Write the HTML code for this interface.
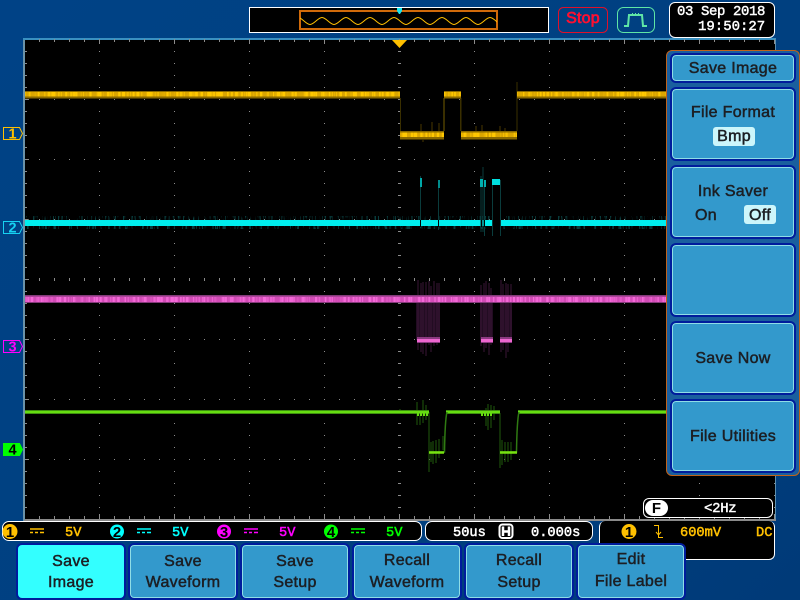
<!DOCTYPE html>
<html><head><meta charset="utf-8"><style>
html,body{margin:0;padding:0;width:800px;height:600px;overflow:hidden}
body{position:relative;background:linear-gradient(135deg,#004286 0%,#004080 60%,#003a78 100%);font-family:"Liberation Sans",sans-serif}
.abs{position:absolute}
.btn{position:absolute;box-sizing:border-box;border:2px solid #001c9c;border-radius:6px;background:#3399cc;box-shadow:inset 0 0 0 1px #8fdde6;}
.t{position:absolute;color:#1c1f24;font-size:16px;letter-spacing:.3px;text-align:center;white-space:nowrap;-webkit-text-stroke:.5px #1c1f24;line-height:20px}
.box{position:absolute;box-sizing:border-box;background:#000;border:1px solid #fff;border-radius:6px}
.m{position:absolute;font-family:"Liberation Mono",monospace;line-height:18px;white-space:nowrap;-webkit-text-stroke:.45px currentColor}
</style></head><body>

<svg class="abs" style="left:0;top:0" width="800" height="600" viewBox="0 0 800 600">
<defs>
<pattern id="gv" width="75" height="12" patternUnits="userSpaceOnUse" patternTransform="translate(24 39)"><rect width="1" height="1" fill="#8c8c8c"/></pattern>
<pattern id="gh" width="15" height="60" patternUnits="userSpaceOnUse" patternTransform="translate(24 39)"><rect width="1" height="1" fill="#8c8c8c"/></pattern>
<pattern id="tT" width="15" height="6" patternUnits="userSpaceOnUse" patternTransform="translate(24 39)"><rect width="1" height="3" fill="#8c8c8c"/></pattern>
<pattern id="tTm" width="75" height="6" patternUnits="userSpaceOnUse" patternTransform="translate(24 39)"><rect width="1" height="5" fill="#8c8c8c"/></pattern>
<pattern id="tB" width="15" height="6" patternUnits="userSpaceOnUse" patternTransform="translate(24 516)"><rect width="1" height="3" fill="#8c8c8c"/></pattern>
<pattern id="tBm" width="75" height="6" patternUnits="userSpaceOnUse" patternTransform="translate(24 514)"><rect width="1" height="5" fill="#8c8c8c"/></pattern>
<pattern id="tL" width="6" height="12" patternUnits="userSpaceOnUse" patternTransform="translate(24 39)"><rect width="3" height="1" fill="#8c8c8c"/></pattern>
<pattern id="tLm" width="6" height="60" patternUnits="userSpaceOnUse" patternTransform="translate(24 39)"><rect width="5" height="1" fill="#8c8c8c"/></pattern>
<pattern id="cV" width="6" height="12" patternUnits="userSpaceOnUse" patternTransform="translate(398 39)"><rect width="3" height="1" fill="#8c8c8c"/></pattern>
<pattern id="cH" width="15" height="6" patternUnits="userSpaceOnUse" patternTransform="translate(24 278)"><rect width="1" height="3" fill="#8c8c8c"/></pattern>
<filter id="n1" x="0" y="0" width="100%" height="100%" color-interpolation-filters="sRGB"><feTurbulence type="fractalNoise" baseFrequency="0.45 0.004" numOctaves="2" seed="3"/><feColorMatrix values="0 0 0 0 0 0 0 0 0 0 0 0 0 0 0 6 0 0 0 -2.6"/><feComposite in="SourceGraphic" operator="in"/></filter>
<filter id="n2" x="0" y="0" width="100%" height="100%" color-interpolation-filters="sRGB"><feTurbulence type="fractalNoise" baseFrequency="0.6 0.05" numOctaves="2" seed="8"/><feColorMatrix values="0 0 0 0 0 0 0 0 0 0 0 0 0 0 0 9 0 0 0 -4.9"/><feComposite in="SourceGraphic" operator="in"/></filter>
<clipPath id="ov"><rect x="300" y="11" width="197" height="18"/></clipPath>
</defs>

<!-- scope screen -->
<rect x="23" y="38" width="753" height="483" fill="#5c8fae"/>
<rect x="23" y="38" width="753" height="2" fill="#3a90c0"/>
<rect x="25" y="40" width="750" height="479" fill="#000"/>
<rect x="24" y="519" width="752" height="2" fill="#8a8a8a"/>
<rect x="23" y="40" width="2" height="480" fill="#6a92a8"/>
<rect x="25" y="39" width="750" height="480" fill="url(#gv)"/>
<rect x="25" y="39" width="750" height="480" fill="url(#gh)"/>
<rect x="25" y="40" width="750" height="3" fill="url(#tT)"/>
<rect x="25" y="40" width="750" height="5" fill="url(#tTm)"/>
<rect x="25" y="516" width="750" height="3" fill="url(#tB)"/>
<rect x="25" y="514" width="750" height="5" fill="url(#tBm)"/>
<rect x="25" y="40" width="3" height="479" fill="url(#tL)"/>
<rect x="25" y="40" width="5" height="479" fill="url(#tLm)"/>
<rect x="398" y="40" width="3" height="479" fill="url(#cV)"/>
<rect x="25" y="278" width="750" height="3" fill="url(#cH)"/>

<!-- CH1 -->
<g>
<path d="M400.500 98V131M443.500 98V132M461 98V131M517 82V131M444.500 98V131M460.500 98V131" stroke="#3a2f00" stroke-width="1" fill="none"/>
<g fill="#8a6a00">
<rect x="25" y="91" width="375" height="7.500"/><rect x="444" y="91" width="17" height="7.500"/><rect x="517" y="91" width="150" height="7.500"/>
<rect x="400" y="131" width="44" height="8.500"/><rect x="461" y="131" width="56" height="8.500"/>
</g>
<g fill="#dba600">
<rect x="25" y="92" width="375" height="4.500"/><rect x="444" y="92" width="17" height="4.500"/><rect x="517" y="92" width="150" height="4.500"/>
<rect x="400" y="132.500" width="44" height="4.500"/><rect x="461" y="132.500" width="56" height="4.500"/>
</g>
<g fill="#ffc800" filter="url(#n1)">
<rect x="25" y="92" width="375" height="4.500"/><rect x="444" y="92" width="17" height="4.500"/><rect x="517" y="92" width="150" height="4.500"/>
<rect x="400" y="132.500" width="44" height="4.500"/><rect x="461" y="132.500" width="56" height="4.500"/>
</g>
<path d="M421 124V131M423 139V142M432 122V131M439 123V131M476 126V131M482 125V131M500 126V131M505 128V131" stroke="#4a3900" fill="none"/>
</g>

<!-- CH2 -->
<g>
<g fill="#083c3c" filter="url(#n2)">
<rect x="25" y="216" width="468" height="13"/><rect x="500" y="216" width="167" height="13"/>
</g>
<g fill="#00eeee">
<rect x="25" y="220" width="468" height="6"/><rect x="500" y="220" width="167" height="6"/>
</g>
<path d="M420.500 176V228M438.500 180V230M481 176V232M484.500 180V236M483 167V232M492.500 180V236M500.500 180V236" stroke="#0a3c3c" stroke-width="1" fill="none"/>
<rect x="420" y="178" width="2" height="9" fill="#00a8a8"/><rect x="438" y="180" width="2" height="8" fill="#008c8c"/>
<rect x="480" y="179" width="3" height="8" fill="#00b0b0"/><rect x="484" y="180" width="2" height="7" fill="#00b0b0"/>
<rect x="492" y="179" width="8" height="6" fill="#00e0e0"/>
<rect x="420" y="220" width="1" height="7" fill="#000"/><rect x="438" y="220" width="1" height="7" fill="#000"/><rect x="481" y="220" width="1" height="7" fill="#000"/><rect x="484" y="220" width="1" height="7" fill="#000"/>
</g>

<!-- CH3 -->
<g>
<g fill="#220c22">
<rect x="416" y="300" width="24" height="40"/><rect x="480" y="300" width="13" height="40"/><rect x="500" y="300" width="12" height="40"/>
</g>
<g stroke="#3a1636" fill="none">
<path d="M418 280V350M421 283V352M423 282V354M426 282V356M429 281V345M431 286V352M434 281V346M437 283V345M439 283V340M481 285V346M484 283V352M486 281V348M489 283V355M491 288V345M501 280V352M503 284V350M506 283V358M508 284V352M511 284V340"/>
</g>
<rect x="25" y="295" width="642" height="8" fill="#843a7a"/>
<rect x="25" y="296.500" width="642" height="5.500" fill="#d24cb6"/>
<rect x="25" y="297" width="642" height="5" fill="#f468d8" filter="url(#n1)"/>
<g fill="#8a3a80">
<rect x="417" y="337" width="23" height="6"/><rect x="481" y="337" width="12" height="6"/><rect x="500" y="337" width="12" height="6"/>
</g>
<g fill="#ee66d0">
<rect x="417" y="339" width="23" height="3"/><rect x="481" y="339" width="12" height="3"/><rect x="500" y="339" width="12" height="3"/>
</g>
</g>

<!-- CH4 -->
<g>
<path d="M417 402V425M420 410V425M423 400V423M426 405V420M429 412V472M431 442V462M433 441V464M436 440V463M439 439V458M443 436V450M486 408V426M488 404V430M491 405V428M494 406V420M500 413V468M502 440V465M505 442V462M508 442V462M511 442V460M400 409V414" stroke="#1f5a0c" fill="none"/>
<path d="M25 412H429M446 412H500M518 412H667" stroke="#3f8f10" stroke-width="4" fill="none"/>
<path d="M25 412H429M446 412H500M518 412H667" stroke="#66dd11" stroke-width="2" fill="none"/>
<path d="M429 452H444.500Q445 420 447 412M500 452H516.500Q517 420 519 412" stroke="#2f7a12" stroke-width="1.500" fill="none"/>
<path d="M429 452.500H444M500 452.500H517" stroke="#77e211" stroke-width="2.500" fill="none"/>
<path d="M417 414H429M481 414H492" stroke="#66dd11" stroke-width="4" stroke-dasharray="2 1" fill="none"/>
</g>

<!-- trigger marker -->
<path d="M392 40H407L399.500 48Z" fill="#ffc000"/>

<!-- channel tags -->
<path d="M3.500 127.500H19.500L22.500 133.500L19.500 139.500H3.500Z" fill="none" stroke="#ffc000"/>
<path d="M3.500 221.500H19.500L22.500 227.500L19.500 233.500H3.500Z" fill="none" stroke="#16d2f2"/>
<path d="M3.500 340.500H19.500L22.500 346.500L19.500 352.500H3.500Z" fill="none" stroke="#ff00ff"/>
<path d="M3.500 443.500H19.500L22.500 449.500L19.500 455.500H3.500Z" fill="#00ff00" stroke="#00ff00"/>
<g font-family="Liberation Sans" font-weight="700" font-size="14.500" text-anchor="middle">
<text x="12.500" y="138.500" fill="#ffc000">1</text>
<text x="12.500" y="232.500" fill="#16d2f2">2</text>
<text x="12.500" y="351.500" fill="#ff00ff">3</text>
<text x="12.500" y="454.500" fill="#000">4</text>
</g>

<!-- top overview -->
<rect x="249.500" y="7.500" width="299" height="25" fill="#000" stroke="#fff"/>
<rect x="300" y="11" width="197" height="18" fill="none" stroke="#d06a0a" stroke-width="2"/>
<path clip-path="url(#ov)" d="M298 17.500c4 0 8 7 12 7s8 -7 12 -7s8 7 12 7s8 -7 12 -7s8 7 12 7s8 -7 12 -7s8 7 12 7s8 -7 12 -7s8 7 12 7s8 -7 12 -7s8 7 12 7s8 -7 12 -7s8 7 12 7s8 -7 12 -7s8 7 12 7s8 -7 12 -7s8 7 12 7" fill="none" stroke="#ffc000" stroke-width="1"/>
<path d="M397 8H402V11L400 14H399L397 11Z" fill="#19e6f0"/>

<!-- run/stop -->
<rect x="558.500" y="7.500" width="49" height="25" rx="5" fill="none" stroke="#e0102a"/>
<rect x="617.500" y="7.500" width="37" height="25" rx="6" fill="none" stroke="#5fe6a6"/>
<path d="M624 26H628L629 15H642L643 26H647" fill="none" stroke="#5fe6a6" stroke-width="2"/>
<path d="M632.500 13V14M635.500 13V14M638.500 13V14" stroke="#5fe6a6" stroke-width="1" fill="none"/>
</svg>

<div class="t" style="left:558px;top:9px;width:50px;color:#ff1030;-webkit-text-stroke:.7px #ff1030;font-size:16px;letter-spacing:.2px">Stop</div>

<!-- date box -->
<div class="box" style="left:669px;top:2px;width:106px;height:36px"></div>
<div class="m" style="left:677px;top:3px;color:#fff;font-size:14px;letter-spacing:-.4px">03 Sep 2018</div>
<div class="m" style="left:698px;top:18px;color:#fff;font-size:14px">19:50:27</div>

<!-- right panel -->
<div class="abs" style="left:666px;top:50px;width:134px;height:426px;box-sizing:border-box;background:#1a5f9e;border:1.500px solid #c0621a;border-radius:6px"></div>
<div class="btn" style="left:670px;top:53px;width:126px;height:30px"></div>
<div class="btn" style="left:670px;top:87px;width:126px;height:74px"></div>
<div class="btn" style="left:670px;top:165px;width:126px;height:74px"></div>
<div class="btn" style="left:670px;top:243px;width:126px;height:74px"></div>
<div class="btn" style="left:670px;top:321px;width:126px;height:74px"></div>
<div class="btn" style="left:670px;top:399px;width:126px;height:74px"></div>
<div class="t" style="left:670px;top:59px;width:126px">Save Image</div>
<div class="t" style="left:670px;top:103px;width:126px">File Format</div>
<div class="abs" style="left:713px;top:127px;width:42px;height:19px;background:#ccf6fb;border-radius:3px"></div>
<div class="t" style="left:713px;top:127px;width:42px">Bmp</div>
<div class="t" style="left:670px;top:182px;width:126px">Ink Saver</div>
<div class="t" style="left:695px;top:206px">On</div>
<div class="abs" style="left:744px;top:205px;width:32px;height:19px;background:#ccf6fb;border-radius:3px"></div>
<div class="t" style="left:744px;top:206px;width:32px">Off</div>
<div class="t" style="left:670px;top:349px;width:126px">Save Now</div>
<div class="t" style="left:670px;top:427px;width:126px">File Utilities</div>

<!-- F box -->
<div class="box" style="left:643px;top:498px;width:130px;height:20px"></div>
<div class="abs" style="left:645px;top:500px;width:23px;height:16px;background:#fff;border-radius:8px"></div>
<div class="abs" style="left:645px;top:500px;width:23px;text-align:center;font:700 15px/17px 'Liberation Sans',sans-serif;color:#000">F</div>
<div class="m" style="left:704px;top:500px;color:#fff;font-size:14px;letter-spacing:-.3px">&lt;2Hz</div>

<!-- status bars -->
<div class="box" style="left:599px;top:521px;width:176px;height:39px;border-top:0"></div>
<div class="box" style="left:2px;top:521px;width:420px;height:20px;border-radius:7px"></div>
<div class="box" style="left:425px;top:521px;width:168px;height:20px;border-radius:7px"></div>

<svg class="abs" style="left:0;top:515px" width="800" height="35" viewBox="0 515 800 35">
<g font-family="Liberation Sans" font-weight="700" font-size="15" text-anchor="middle" fill="#000">
<circle cx="10" cy="531.500" r="7.500" fill="#ffc000"/><text x="10" y="537">1</text>
<circle cx="117" cy="531.500" r="7" fill="#00ffff"/><text x="117" y="537">2</text>
<circle cx="224" cy="531.500" r="7" fill="#ff00ff"/><text x="224" y="537">3</text>
<circle cx="331" cy="531.500" r="7" fill="#00ff00"/><text x="331" y="537">4</text>
<circle cx="629" cy="531.500" r="7.500" fill="#ffc000"/><text x="629" y="537">1</text>
</g>
<g stroke-width="1.500" fill="none">
<path d="M30 529H44M30 532.500H33M35 532.500H38M40 532.500H44" stroke="#ffc000"/>
<path d="M137 529H151M137 532.500H140M142 532.500H145M147 532.500H151" stroke="#00ffff"/>
<path d="M244 529H258M244 532.500H247M249 532.500H252M254 532.500H258" stroke="#ff00ff"/>
<path d="M351 529H365M351 532.500H354M356 532.500H359M361 532.500H365" stroke="#00ff00"/>
</g>
<path d="M654 525.500H658.500V537.500H663M656 532L658.500 535L661 532" fill="none" stroke="#ffc000" stroke-width="1"/>
<rect x="499.500" y="524.500" width="13" height="13.500" rx="3" fill="#000" stroke="#fff" stroke-width="2"/>
<path d="M503 526.500V536M509 526.500V536M503 531.500H509" stroke="#fff" stroke-width="2.500" fill="none"/>
<g font-family="Liberation Mono" font-size="13.700" stroke-width=".5">
<text x="65" y="536" fill="#ffc000" stroke="#ffc000">5V</text>
<text x="172" y="536" fill="#00ffff" stroke="#00ffff">5V</text>
<text x="279" y="536" fill="#ff00ff" stroke="#ff00ff">5V</text>
<text x="386" y="536" fill="#00ff00" stroke="#00ff00">5V</text>
<text x="453" y="536" fill="#fff" stroke="#fff">50us</text>
<text x="531" y="536" fill="#fff" stroke="#fff">0.000s</text>
<text x="680" y="536" fill="#ffc000" stroke="#ffc000">600mV</text>
<text x="756" y="536" fill="#ffc000" stroke="#ffc000">DC</text>
</g>
</svg>

<!-- bottom buttons -->
<div class="btn" style="left:16px;top:543px;width:110px;height:57px;background:#33ffff;box-shadow:none"></div>
<div class="btn" style="left:128px;top:543px;width:110px;height:57px"></div>
<div class="btn" style="left:240px;top:543px;width:110px;height:57px"></div>
<div class="btn" style="left:352px;top:543px;width:110px;height:57px"></div>
<div class="btn" style="left:464px;top:543px;width:110px;height:57px"></div>
<div class="btn" style="left:576px;top:543px;width:110px;height:57px"></div>

<div class="t" style="left:16px;top:552px;width:110px">Save</div>
<div class="t" style="left:16px;top:573px;width:110px">Image</div>
<div class="t" style="left:128px;top:552px;width:110px">Save</div>
<div class="t" style="left:128px;top:573px;width:110px">Waveform</div>
<div class="t" style="left:240px;top:552px;width:110px">Save</div>
<div class="t" style="left:240px;top:573px;width:110px">Setup</div>
<div class="t" style="left:352px;top:551px;width:110px">Recall</div>
<div class="t" style="left:352px;top:573px;width:110px">Waveform</div>
<div class="t" style="left:464px;top:551px;width:110px">Recall</div>
<div class="t" style="left:464px;top:573px;width:110px">Setup</div>
<div class="t" style="left:576px;top:550px;width:110px">Edit</div>
<div class="t" style="left:576px;top:572px;width:110px">File Label</div>
</body></html>
